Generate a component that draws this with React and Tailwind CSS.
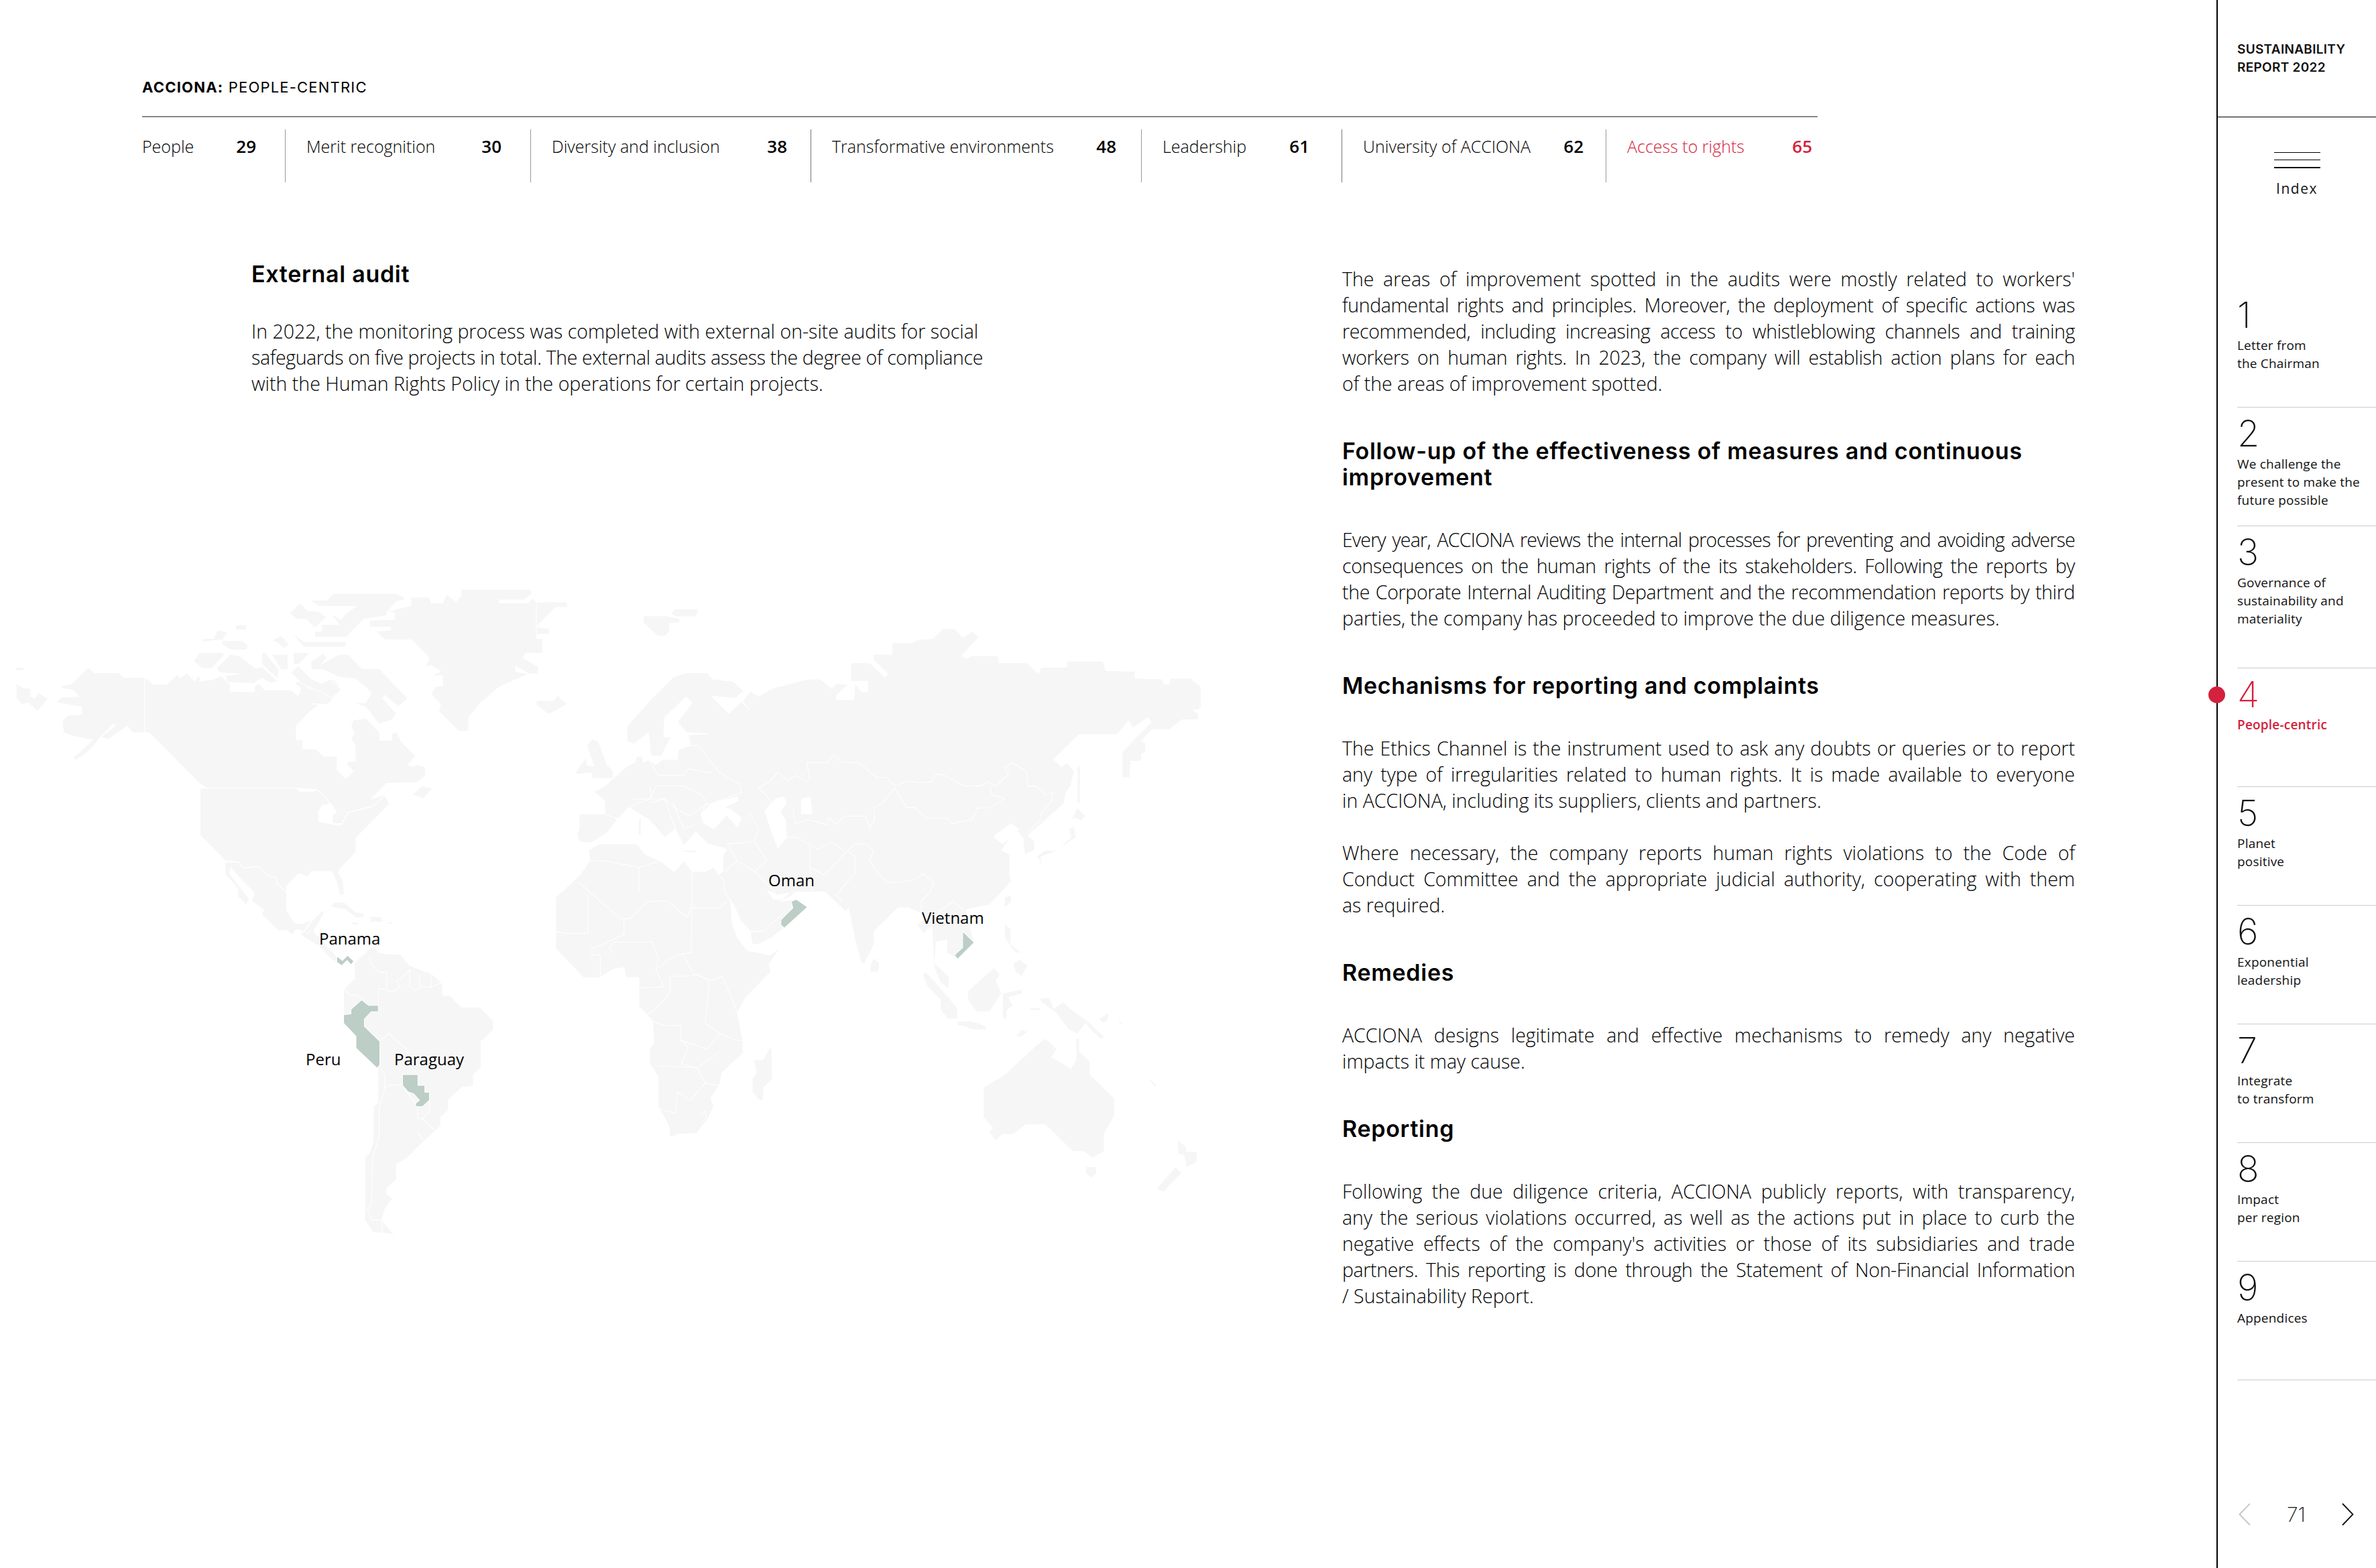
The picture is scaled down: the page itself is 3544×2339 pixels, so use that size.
import React from "react";

const navItems = [
  { label: "People", page: 29, box: "w-[214px] pr-[43px] border-r border-[#999]" },
  { label: "Merit recognition", page: 30, box: "w-[366px] pl-[31px] pr-[43px] border-r border-[#999]" },
  { label: "Diversity and inclusion", page: 38, box: "w-[418px] pl-[31px] pr-[35px] border-r border-[#777]" },
  { label: "Transformative environments", page: 48, box: "w-[493px] pl-[31px] pr-[37px] border-r border-[#999]" },
  { label: "Leadership", page: 61, box: "w-[299px] pl-[31px] pr-[48px] border-r border-[#777]" },
  { label: "University of ACCIONA", page: 62, box: "w-[394px] pl-[31px] pr-[33px] border-r border-[#999]" },
  { label: "Access to rights", page: 65, box: "w-[315px] pl-[31px] pr-[8px] text-[#d4213d]" },
];

const indexItems = [
  { n: 1, lines: ["Letter from", "the Chairman"] },
  { n: 2, lines: ["We challenge the", "present to make the", "future possible"] },
  { n: 3, lines: ["Governance of", "sustainability and", "materiality"], tall: true },
  { n: 4, lines: ["People-centric"], active: true },
  { n: 5, lines: ["Planet", "positive"] },
  { n: 6, lines: ["Exponential", "leadership"] },
  { n: 7, lines: ["Integrate", "to transform"] },
  { n: 8, lines: ["Impact", "per region"] },
  { n: 9, lines: ["Appendices"] },
];

// these lines run over the column at full size, the original squeezes them too
const tightLines = new Set([
  "fundamental rights and principles. Moreover, the deployment of specific actions was",
  "workers on human rights. In 2023, the company will establish action plans for each",
  "partners. This reporting is done through the Statement of Non-Financial Information",
  "the Corporate Internal Auditing Department and the recommendation reports by third",
  "consequences on the human rights of the its stakeholders. Following the reports by",
  "recommended, including increasing access to whistleblowing channels and training",
]);
const tightestLine = "Every year, ACCIONA reviews the internal processes for preventing and avoiding adverse";

const sections = [
  {
    paras: [
      [
        "The areas of improvement spotted in the audits were mostly related to workers'",
        "fundamental rights and principles. Moreover, the deployment of specific actions was",
        "recommended, including increasing access to whistleblowing channels and training",
        "workers on human rights. In 2023, the company will establish action plans for each",
        "of the areas of improvement spotted.",
      ],
    ],
  },
  {
    title: ["Follow-up of the effectiveness of measures and continuous", "improvement"],
    paras: [
      [
        tightestLine,
        "consequences on the human rights of the its stakeholders. Following the reports by",
        "the Corporate Internal Auditing Department and the recommendation reports by third",
        "parties, the company has proceeded to improve the due diligence measures.",
      ],
    ],
  },
  {
    title: ["Mechanisms for reporting and complaints"],
    paras: [
      [
        "The Ethics Channel is the instrument used to ask any doubts or queries or to report",
        "any type of irregularities related to human rights. It is made available to everyone",
        "in ACCIONA, including its suppliers, clients and partners.",
      ],
      [
        "Where necessary, the company reports human rights violations to the Code of",
        "Conduct Committee and the appropriate judicial authority, cooperating with them",
        "as required.",
      ],
    ],
  },
  {
    title: ["Remedies"],
    paras: [
      [
        "ACCIONA designs legitimate and effective mechanisms to remedy any negative",
        "impacts it may cause.",
      ],
    ],
  },
  {
    title: ["Reporting"],
    paras: [
      [
        "Following the due diligence criteria, ACCIONA publicly reports, with transparency,",
        "any the serious violations occurred, as well as the actions put in place to curb the",
        "negative effects of the company's activities or those of its subsidiaries and trade",
        "partners. This reporting is done through the Statement of Non-Financial Information",
        "/ Sustainability Report.",
      ],
    ],
  },
];

// map shapes, traced in the coordinates of two crops, hence the two groups below
const americas = [
  "40,212 62,212 62,220 40,220",
  "42,250 60,260 80,262 80,280 90,285 100,272 125,285 98,315 72,295 58,300 42,285",
  "160,255 185,252 228,212 245,225 310,225 322,236 376,236 376,366 345,366 330,350 280,382 262,375 300,348 295,345 262,375 240,400 215,420 195,430 190,422 205,412 240,382 195,375 165,365 162,335 178,324 212,322 212,305 145,295 160,282 205,280 188,265 160,262",
  "376,236 400,252 432,252 462,228 468,238 485,225 507,245 512,234 520,234 520,245 555,240 575,232 598,252 598,268 660,270 662,255 672,250 688,265 755,265 775,278 782,262 765,250 785,240 805,262 815,245 832,262 855,245 868,240 888,265 850,300 810,297 830,300 803,318 770,350 770,382 787,382 787,403 822,403 840,420 876,420 876,452 898,472 918,455 900,440 905,432 923,432 923,395 912,380 920,365 912,350 918,335 952,332 987,365 987,383 1018,383 1018,368 1030,362 1042,385 1080,420 1060,440 1070,445 1085,440 1105,445 1105,465 1085,482 1005,484 965,520 1000,510 1003,538 968,538 935,545 905,552 888,578 865,578 862,560 875,550 860,532 820,498 770,495 538,495 520,485 388,366 376,366",
  "520,495 770,495 778,502 815,502 825,498 860,532 838,535 828,550 828,572 865,580 888,580 905,552 935,545 968,538 1000,512 1012,532 925,612 925,645 885,682 880,692 892,712 895,745 882,745 875,715 862,690 810,690 800,702 775,695 745,725 745,738 720,718 717,704 700,702 672,678 632,682 620,668 585,665 520,605",
  "585,668 620,668 632,682 672,678 700,702 717,704 720,718 745,738 745,780 765,810 785,812 810,802 790,830 770,825 760,838 745,828 722,828 680,790 685,780 655,760 660,740 612,695 600,680 597,695 640,745 648,755 640,768 618,748 618,730 585,695",
  "790,830 812,805 838,780 842,785 838,795 815,830 835,850 862,875 875,888 875,902 860,895 830,865 800,850 780,835",
  "858,770 870,762 895,762 925,785 945,787 945,798 925,798 895,778 870,775",
  "962,795 990,795 997,808 962,808",
  "915,808 930,808 930,815 915,815",
  "1008,808 1018,808 1018,813 1008,813",
  "920,905 960,870 975,868 985,880 1010,883 1040,883 1065,910 1120,928 1150,952 1150,980 1170,980 1198,1007 1248,1007 1282,1040 1282,1060 1250,1088 1250,1148 1230,1165 1230,1192 1200,1195 1165,1225 1165,1248 1145,1265 1145,1285 1100,1322 1060,1358 1030,1375 1030,1410 1005,1432 1005,1445 1020,1455 1000,1480 992,1505 1025,1540 995,1535 970,1535 948,1505 948,1360 962,1345 970,1320 970,1240 982,1230 982,1150 925,1103 925,1075 893,1045 893,965 922,940",
  "1198,30 1380,30 1382,40 1362,55 1298,55 1298,62 1372,62 1385,50 1395,62 1415,58 1472,58 1472,72 1445,72 1392,120 1425,122 1425,135 1395,135 1395,145 1410,145 1410,180 1365,180 1360,190 1398,210 1398,228 1375,228 1340,210 1340,222 1375,228 1298,258 1250,295 1218,330 1218,362 1192,362 1140,315 1145,300 1120,275 1130,258 1150,255 1150,232 1120,232 1145,222 1120,208 1105,212 1115,190 1070,148 1000,148 975,128 1015,125 1015,118 960,118 960,102 1025,100 1025,85 1005,82 1068,68 1068,48 1118,48 1120,62 1150,62 1160,42 1185,58 1198,45",
  "805,55 850,55 865,40 1030,40 1050,48 1050,55 1030,58 1005,85 1005,92 945,100 900,142 818,142 818,128 835,128 835,112 880,112 858,85 885,100 905,82 925,70 830,70",
  "752,85 780,62 800,80 830,82 848,95 818,120 795,100 770,100",
  "612,113 640,113 640,125 612,125",
  "528,145 555,145 565,125 592,130 578,148 528,153",
  "578,150 630,150 645,160 640,172 600,172 578,160",
  "518,178 580,178 582,185 550,215 525,215 503,198",
  "562,215 598,182 622,185 665,215 680,210 722,245 705,250 680,238 660,250 590,248 585,232 620,228 570,225",
  "680,180 688,176 725,218 722,240 680,205",
  "705,182 748,182 748,218 730,218",
  "762,178 805,178 778,205 762,205",
  "762,135 790,152 900,152 900,165 790,165 765,140",
  "705,150 730,138 752,158 738,168 720,155",
  "808,198 840,180 850,190 835,205 880,182 905,182 940,215 985,215 1060,285 1035,305 1000,278 995,285 1030,320 1020,335 985,345 950,305 915,295 950,295 965,272 925,240 880,235 840,218 808,218",
  "755,225 775,208 810,240 835,250 858,240 888,265 860,285 835,270 810,262 785,250",
  "1072,510 1095,490 1125,495 1100,520",
];

const americasBorders = [
  "893,965 908,978 930,980 945,990",
  "960,885 962,905 985,925 1005,925 1005,965 983,965 983,1003",
  "1005,970 1025,970 1040,958 1030,945 1045,938 1065,920",
  "1065,920 1065,958 1078,968 1095,960 1120,960 1148,950",
  "1090,930 1090,960",
  "1120,928 1120,960",
  "988,1085 1012,1068 1025,1082 1060,1108 1062,1140 1085,1165",
  "988,1150 1000,1165 1000,1195 1010,1190 1045,1188",
  "1000,1195 985,1245 985,1310 968,1360 965,1470 955,1480 965,1505 992,1505 992,1535",
  "1045,1190 1085,1240 1085,1268 1098,1268 1130,1295",
  "1085,1300 1100,1318",
  "1116,1225 1116,1250 1098,1268",
  "790,830 800,835 810,825",
];

const americasMarked = [
  "875,888 890,898 903,886 920,900 912,908 902,898 888,910 875,902",
  "940,990 958,1003 983,1003 983,1018 965,1018 947,1035 947,1052 987,1087 987,1142 980,1150 925,1103 925,1075 893,1045 893,1025 912,1023 912,1012",
  "1046,1165 1086,1165 1086,1190 1104,1190 1104,1206 1116,1206 1116,1225 1098,1240 1080,1240 1080,1232 1090,1225 1075,1210 1060,1205 1046,1190",
];

const eastern = [
  "0,75 0,60 72,60 72,72 45,72 0,118 30,122 30,135 0,135",
  "250,92 305,92 335,98 335,108 312,110 312,128 300,140 285,140 250,108",
  "315,85 325,76 378,76 378,85 370,94 325,94",
  "0,290 40,290 50,278 72,298 50,312 28,322 0,300",
  "228,392 212,385 212,350 270,285 320,235 350,225 400,225 412,240 460,245 485,268 465,285 410,280 450,320 480,292 498,312 482,292 500,268 520,280 545,265 565,258 635,240 665,240 690,262 702,250 730,252 702,278 702,288 742,288 745,250 762,270 775,270 775,245 735,245 735,202 780,202 815,235 822,228 788,195 788,182 832,182 832,155 880,155 890,148 928,145 950,122 978,122 998,142 1020,128 1035,142 995,185 1005,192 1020,185 1080,185 1082,202 1148,202 1175,228 1180,212 1240,212 1242,198 1325,198 1332,220 1400,222 1400,238 1465,240 1468,252 1480,252 1482,238 1530,238 1555,258 1555,305 1548,312 1535,312 1548,320 1548,335 1510,335 1480,358 1440,358 1415,385 1425,390 1425,410 1415,415 1415,432 1390,432 1388,470 1370,470 1370,410 1438,340 1430,330 1395,355 1385,338 1358,370 1268,370 1210,428 1228,445 1240,435 1258,455 1250,490 1238,505 1235,530 1180,580 1150,605 1165,620 1165,640 1142,650 1138,612 1110,578 1072,610 1090,625 1110,610 1088,640 1107,650 1107,700 1112,712 1060,768 1025,775 1005,780 1024,856 985,895 960,880 960,850 935,855 932,905 965,935 965,965 945,950 930,915 925,820 905,835 890,815 915,795 870,775 845,775 790,830 790,860 770,900 768,905 760,905 745,850 730,775 725,785 675,738 605,738 600,745 570,760 610,755 634,773 580,822 550,845 520,860 505,860 500,830 478,805 460,765 445,745 420,700 436,690 437,650 445,640 438,635 400,625 373,597 345,630 325,590 300,610 265,570 240,555 225,545 215,540 195,565 175,565 160,555 160,525 135,503 160,490 182,470 210,445 230,435 235,420 248,420 250,435 262,428 280,440 295,428 330,428 332,405 360,395 355,370 403,368 350,365 330,340 365,295 350,282 300,330 298,375 315,375 292,420 268,420 262,365",
  "100,555 160,555 190,568 165,600 130,622 115,622 100,620 95,603 100,590",
  "90,462 100,445 118,422 118,440 135,445 118,395 130,380 145,385 165,440 180,455 180,472 130,472 130,460",
  "240,565 245,565 245,605 238,605",
  "345,640 375,640 375,645 345,645",
  "45,750 100,700 125,665 122,640 148,625 235,625 255,650 290,665 322,690 345,665 365,690 395,690 415,680 440,715 440,735 455,760 458,810 470,845 495,875 545,885 570,870 545,905 548,925 490,985 470,1020 483,1085 483,1115 435,1160 428,1190 408,1220 415,1240 400,1270 375,1302 330,1305 312,1312 310,1285 285,1240 285,1170 265,1140 265,1105 275,1090 272,1040 240,1005 240,938 210,938 205,915 180,918 150,938 110,938 45,870",
  "550,1095 552,1175 532,1195 530,1225 520,1225 505,1205 505,1175 515,1160 508,1130 530,1130",
  "790,892 803,905 800,925 780,925 782,905",
  "1245,590 1258,585 1262,610 1240,625 1210,645 1180,655 1185,685 1178,665 1170,655 1190,640 1218,640 1250,610",
  "1250,570 1265,540 1285,560 1275,572 1260,565",
  "1265,445 1272,440 1272,530 1265,530",
  "1095,750 1110,745 1112,760 1095,775",
  "1095,810 1110,825 1110,860 1135,880 1120,880 1095,845",
  "1115,905 1130,895 1150,910 1135,935 1120,925",
  "903,930 912,925 965,985 985,1010 985,1035 962,1035 945,1012 945,990 915,960",
  "1010,968 1070,915 1085,930 1075,945 1088,975 1060,1018 1030,1018 1008,990",
  "1090,975 1135,965 1138,975 1105,985 1115,1005 1100,1015 1100,1035 1090,1035",
  "985,1040 1015,1040 1035,1045 1052,1052 1052,1060 1020,1060 1000,1052 985,1050",
  "1178,985 1200,985 1210,1010 1232,995 1250,1012 1290,1040 1330,1078 1320,1082 1295,1060 1285,1045 1265,1070 1245,1060 1215,1020 1180,995",
  "1120,1075 1135,1060 1150,1065 1132,1078",
  "1155,1008 1178,1008 1178,1015 1155,1015",
  "1315,1035 1340,1020 1335,1040 1325,1045",
  "1360,1035 1372,1045 1365,1048",
  "1432,1172 1452,1190 1448,1194 1432,1178",
  "1045,1195 1095,1165 1165,1100 1190,1080 1218,1105 1205,1125 1220,1132 1250,1150 1262,1130 1262,1080 1270,1080 1270,1110 1295,1135 1295,1165 1352,1220 1352,1260 1328,1305 1328,1345 1300,1360 1280,1345 1255,1345 1190,1282 1145,1282 1115,1305 1090,1305 1075,1320 1058,1300 1068,1290 1045,1265",
  "1500,1315 1520,1335 1520,1345 1545,1345 1545,1370 1520,1382 1515,1355 1500,1350",
  "1495,1380 1510,1395 1480,1425 1468,1440 1450,1432",
  "1285,1380 1310,1380 1310,1395 1298,1408 1285,1395",
];

const easternWater = [
  "385,555 410,530 432,525 470,515 472,525 440,540 455,545 480,565 470,585 445,558 415,590 390,575",
  "548,590 535,550 560,520 578,515 585,530 570,550 583,570 585,610 565,635",
  "620,520 640,516 645,555 620,555",
  "540,735 565,745 590,740 575,755 555,755",
  "1070,608 1110,578 1128,590 1090,625",
];

const easternBorders = [
  "520,495 545,480 565,458 590,478 605,465 630,478 640,475 632,435 680,435 695,418 715,435 755,435 795,470 820,470 838,490 870,478 895,482 925,480 935,462 955,465 1000,490 1040,490 1055,480 1075,490 1105,460 1095,448 1112,435 1145,455 1150,490 1170,490 1190,510 1208,505 1205,525 1180,555 1178,570 1150,600",
  "838,495 865,540 885,540 912,565 960,565 972,578 1020,568 1032,542 1060,540 1095,520 1065,510 1062,490",
  "838,495 810,530 790,540 790,570 780,590 770,560 720,560 700,580 685,565 680,580 640,570 630,570 605,578 600,540",
  "520,495 550,525 535,550",
  "730,640 745,625 770,625 788,640 780,665 795,690 820,715 850,715 880,710 905,695 930,715 920,740 900,760 900,790 930,810 945,780 975,760 1000,780",
  "725,640 745,655 745,695 722,720 700,745 715,760",
  "640,630 640,680 645,735",
  "640,680 672,698 725,645 690,620 660,638 635,625 610,610 585,610",
  "510,620 540,665 510,690 560,740",
  "472,665 510,690",
  "440,690 470,665 450,630",
  "500,830 530,830 575,790",
  "445,625 510,620 520,590 500,555",
  "350,395 380,395 405,430 430,460 475,485 480,505 440,520 395,535 385,555",
  "262,428 285,465 345,465 355,450 410,460",
  "215,540 265,520 280,490 345,490 385,510 400,530 360,560 330,545 300,520 265,530",
  "225,520 300,520 325,590",
  "265,490 270,520",
  "320,530 345,590 370,580",
  "125,665 160,665 240,680 240,740",
  "100,715 195,800 220,800 262,760",
  "240,680 290,665",
  "262,760 285,760 305,757 352,798 362,775 430,775 445,760",
  "365,690 362,880 342,882 368,930 410,945 435,935 470,1020",
  "120,745 120,835 75,835 45,830",
  "205,800 205,838 130,870 130,885 150,885 150,938",
  "180,880 170,870 180,855 270,855 285,890 280,920 298,960 240,962",
  "342,882 310,895 285,915",
  "312,935 350,935 380,930 405,950 395,1045 430,1070 470,1085 483,1085",
  "312,935 312,975 280,1010 260,1025 270,1040 300,1050 338,1050 338,1085 400,1105 430,1068",
  "338,1085 355,1100 340,1140 375,1150 430,1110",
  "285,1145 375,1148 395,1185 360,1225 330,1205 325,1255 285,1245",
  "395,1185 428,1190",
  "385,1260 395,1250 398,1265 388,1275",
];

const easternMarked = [
  "596,760 608,755 634,773 580,822 572,815 572,803 600,775",
  "997,830 1024,856 985,895 978,885 997,868",
];

const mapLabels = [
  { text: "Panama", box: "left-[476px] top-[524px]" },
  { text: "Oman", box: "left-[1146px] top-[437px]" },
  { text: "Vietnam", box: "left-[1375px] top-[493px]" },
  { text: "Peru", box: "left-[456px] top-[704px]" },
  { text: "Paraguay", box: "left-[588px] top-[704px]" },
];

const WorldMap = () => (
  <div className="relative mt-[268px] w-[1800px] h-[1000px]">
    <svg viewBox="0 0 1800 1000" className="block w-[1800px] h-[1000px]">
      <g transform="scale(0.574 0.6378)" stroke="#fff" strokeWidth="1.8" strokeLinejoin="round">
        {americas.map((p, i) => (
          <polygon key={i} points={p} fill="#f6f6f6" />
        ))}
        {americasBorders.map((p, i) => (
          <polyline key={i} points={p} fill="none" />
        ))}
        {americasMarked.map((p, i) => (
          <polygon key={i} points={p} fill="#bccec6" />
        ))}
      </g>
      <g transform="translate(800 0) scale(0.6378)" stroke="#fff" strokeWidth="1.6" strokeLinejoin="round">
        {eastern.map((p, i) => (
          <polygon key={i} points={p} fill="#f6f6f6" />
        ))}
        {easternWater.map((p, i) => (
          <polygon key={i} points={p} fill="#fff" />
        ))}
        {easternBorders.map((p, i) => (
          <polyline key={i} points={p} fill="none" />
        ))}
        {easternMarked.map((p, i) => (
          <polygon key={i} points={p} fill="#bccec6" />
        ))}
      </g>
    </svg>
    {mapLabels.map((l) => (
      <span key={l.text} className={`absolute text-[24px] leading-[32px] text-black ${l.box}`}>
        {l.text}
      </span>
    ))}
  </div>
);

const Paragraph = ({ lines }) => (
  <p>
    {lines.map((line, i) => (
      <span
        key={i}
        className={`block ${i === lines.length - 1 ? "text-left" : "text-justify [text-align-last:justify]"} ${tightLines.has(line) ? "tracking-[-0.35px]" : ""} ${line === tightestLine ? "tracking-[-0.75px]" : ""}`}
      >
        {line}
      </span>
    ))}
  </p>
);

const RightColumn = () => (
  <div className="w-[1093px] pt-[8px] text-[28.5px] leading-[39px] font-light text-black">
    {sections.map((s, i) => (
      <section key={i} className={i > 0 ? "mt-[61px]" : ""}>
        {s.title && (
          <h2 className="mb-[55px] font-['Inter'] text-[34px] leading-[39px] font-semibold tracking-[0.7px] text-black">
            {s.title.map((t) => (
              <span key={t} className="block">
                {t}
              </span>
            ))}
          </h2>
        )}
        <div className="space-y-[39px]">
          {s.paras.map((p, j) => (
            <Paragraph key={j} lines={p} />
          ))}
        </div>
      </section>
    ))}
  </div>
);

const Sidebar = () => (
  <aside className="relative flex h-[2339px] w-[238px] flex-col border-l-2 border-black font-['Open_Sans',sans-serif] text-[#111]">
    <div className="h-[175px] border-b border-black pl-[29px] pt-[60px] font-['Inter'] text-[19px] leading-[27px] font-semibold tracking-[0.3px]">
      SUSTAINABILITY
      <br />
      REPORT 2022
    </div>
    <div className="mt-[52px] flex flex-col items-center">
      <div className="w-[69px] border-t border-black" />
      <div className="mt-[10px] w-[69px] border-t border-black" />
      <div className="mt-[10px] w-[69px] border-t-2 border-black" />
      <span className="mt-[16px] text-[21px] leading-[28px] tracking-[1.5px]">Index</span>
    </div>
    <div className="mt-[136px] pl-[29px]">
      {indexItems.map((item) => (
        <div
          key={item.n}
          className={`border-b border-[#ccc] pt-[7px] ${item.tall ? "h-[212px]" : "h-[177px]"} ${item.active ? "text-[#d4213d]" : ""}`}
        >
          <div className="font-['Inter'] text-[54px] leading-[64px] font-extralight">{item.n}</div>
          <div className={`text-[19px] leading-[27px] tracking-[0.2px] ${item.active ? "font-semibold" : ""}`}>
            {item.lines.map((l) => (
              <span key={l} className="block">
                {l}
              </span>
            ))}
          </div>
        </div>
      ))}
    </div>
    <div className="mt-auto flex items-center justify-between pb-[62px] pl-[31px] pr-[33px]">
      <svg width="18" height="34" viewBox="0 0 18 34" fill="none" stroke="#bbb" strokeWidth="1.6">
        <path d="M17 1 1.5 17 17 33" />
      </svg>
      <span className="font-['Inter'] text-[30px] leading-[36px] font-extralight">71</span>
      <svg width="18" height="34" viewBox="0 0 18 34" fill="none" stroke="#111" strokeWidth="1.8">
        <path d="M1 1 16.5 17 1 33" />
      </svg>
    </div>
    <span className="absolute left-[-14px] top-[1024px] h-[25px] w-[25px] rounded-full bg-[#d4213d]" />
  </aside>
);

export default function App() {
  return (
    <div className="flex h-[2339px] w-[3544px] overflow-hidden bg-white font-['Open_Sans',sans-serif] text-black">
      <main className="w-[3306px] shrink-0">
        <div className="ml-[212px] w-[2499px]">
          <div className="pt-[115px] pb-[28px] font-['Inter'] text-[22px] leading-[30px] tracking-[1.2px] border-b-2 border-[#888]">
            <b className="font-bold">ACCIONA:</b> PEOPLE-CENTRIC
          </div>
          <nav className="mt-[18px] flex h-[79px] text-[25px] leading-[30px] font-light">
            {navItems.map((n) => (
              <div key={n.label} className={`flex justify-between pt-[10px] ${n.box}`}>
                <span>{n.label}</span>
                <b className="text-[26px] font-semibold">{n.page}</b>
              </div>
            ))}
          </nav>
        </div>
        <div className="mt-[117px] flex">
          <div className="w-[2002px] shrink-0">
            <div className="pl-[375px]">
              <h2 className="font-['Inter'] text-[34px] leading-[39px] font-semibold tracking-[0.7px]">External audit</h2>
              <p className="mt-[47px] text-[28.5px] leading-[39px] font-light text-black">
                In 2022, the monitoring process was completed with external on-site audits for social
                <br />
                <span className="tracking-[-0.35px]">safeguards on five projects in total. The external audits assess the degree of compliance</span>
                <br />
                with the Human Rights Policy in the operations for certain projects.
              </p>
            </div>
            <WorldMap />
          </div>
          <RightColumn />
        </div>
      </main>
      <Sidebar />
    </div>
  );
}
